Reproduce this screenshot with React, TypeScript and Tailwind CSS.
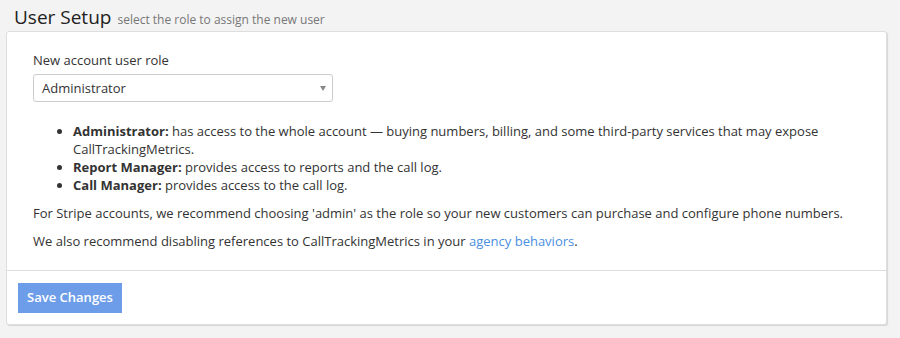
import React from "react";

export default function App() {
  return (
    <div className="min-h-[338px] w-[900px] bg-[#f3f3f3] text-[#333] font-['Open_Sans',sans-serif] pt-[3px]">
      <div className="flex items-baseline pl-[14px] h-[28px]">
        <span className="text-[19px] leading-[28px] text-[#222]">User Setup</span>
        <span className="text-[12px] text-[#777] ml-[6px]">select the role to assign the new user</span>
      </div>
      <div className="ml-[6px] w-[881px] bg-white border border-[#dedede] rounded-[3px] shadow-[1px_1px_1px_rgba(0,0,0,0.12)]">
        <div className="pl-[26px] pr-[20px] pt-[19px] pb-[20px] text-[13px] leading-[18px]">
          <div className="mb-[5px]">New account user role</div>
          <div className="relative w-[300px] h-[28px] border border-[#ccc] rounded-[3px] flex items-center pl-[8px]">
            <span className="text-[13px]">Administrator</span>
            <span className="absolute right-[6px] top-[11px] w-0 h-0 border-l-[3.5px] border-r-[3.5px] border-t-[5px] border-l-transparent border-r-transparent border-t-[#888]"></span>
          </div>
          <ul className="list-disc pl-[40px] mt-[20px] mb-[10px]">
            <li>
              <b>Administrator:</b> has access to the whole account — buying numbers, billing, and some third-party services that may expose CallTrackingMetrics.
            </li>
            <li>
              <b>Report Manager:</b> provides access to reports and the call log.
            </li>
            <li>
              <b>Call Manager:</b> provides access to the call log.
            </li>
          </ul>
          <p className="mb-[10px]">For Stripe accounts, we recommend choosing 'admin' as the role so your new customers can purchase and configure phone numbers.</p>
          <p>
            We also recommend disabling references to CallTrackingMetrics in your{" "}
            <a className="text-[#4a8fe0]">agency behaviors</a>.
          </p>
        </div>
        <div className="border-t border-[#dedede] px-[11px] pt-[12px] pb-[11px]">
          <button className="bg-[#6d9de8] text-white text-[13px] font-semibold h-[30px] w-[104px] whitespace-nowrap">Save Changes</button>
        </div>
      </div>
    </div>
  );
}
